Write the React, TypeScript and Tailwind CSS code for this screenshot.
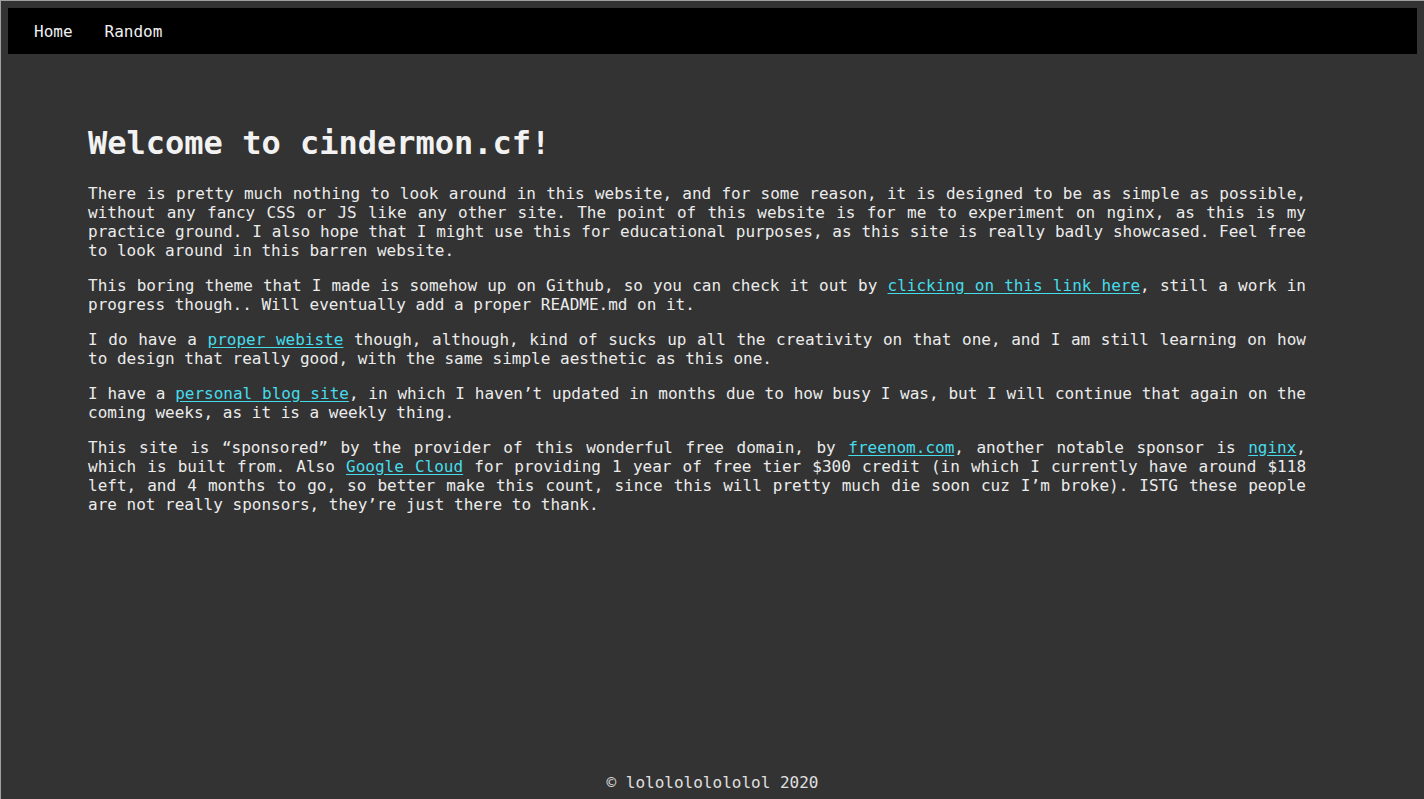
const mono = "font-['DejaVu_Sans_Mono',monospace]";

const A = ({ children }: { children: React.ReactNode }) => (
  <a href="#" className="text-[#45dcec] underline underline-offset-2">
    {children}
  </a>
);

export default function App() {
  return (
    <div
      className={`min-h-screen flex flex-col bg-[#333333] text-[#ececec] border-t border-l border-[#a0a0a0] ${mono}`}
    >
      {/* Nav */}
      <nav className="mx-[7px] mt-[7px] h-[46px] bg-black flex items-center pl-[10px] pt-[2px] text-[16px]">
        <a href="#" className="px-4 text-[#f0f0f0]">Home</a>
        <a href="#" className="px-4 text-[#f0f0f0]">Random</a>
      </nav>

      {/* Content */}
      <main className="flex-1 pl-[87px] pr-[118px] pt-[71px]">
        <h1 className="text-[32px] font-bold leading-[37px] text-[#f2f2f2]">
          Welcome to cindermon.cf!
        </h1>
        <div className="mt-[22px] flex flex-col gap-4 text-[16px] leading-[19px] text-justify">
          <p>
            There is pretty much nothing to look around in this website, and for some reason, it is designed to be as
            simple as possible, without any fancy CSS or JS like any other site. The point of this website is for me to
            experiment on nginx, as this is my practice ground. I also hope that I might use this for educational
            purposes, as this site is really badly showcased. Feel free to look around in this barren website.
          </p>
          <p>
            This boring theme that I made is somehow up on Github, so you can check it out by{" "}
            <A>clicking on this link here</A>, still a work in progress though.. Will eventually add a proper README.md
            on it.
          </p>
          <p>
            I do have a <A>proper webiste</A> though, although, kind of sucks up all the creativity on that one, and I
            am still learning on how to design that really good, with the same simple aesthetic as this one.
          </p>
          <p>
            I have a <A>personal blog site</A>, in which I haven’t updated in months due to how busy I was, but I will
            continue that again on the coming weeks, as it is a weekly thing.
          </p>
          <p>
            This site is “sponsored” by the provider of this wonderful free domain, by <A>freenom.com</A>, another
            notable sponsor is <A>nginx</A>, which is built from. Also <A>Google Cloud</A> for providing 1 year of free
            tier $300 credit (in which I currently have around $118 left, and 4 months to go, so better make this
            count, since this will pretty much die soon cuz I’m broke). ISTG these people are not really sponsors,
            they’re just there to thank.
          </p>
        </div>
      </main>

      {/* Footer */}
      <footer className="text-center text-[16px] leading-[19px] pb-[7px] text-[#e0e0e0]">
        © lololololololol 2020
      </footer>
    </div>
  );
}
